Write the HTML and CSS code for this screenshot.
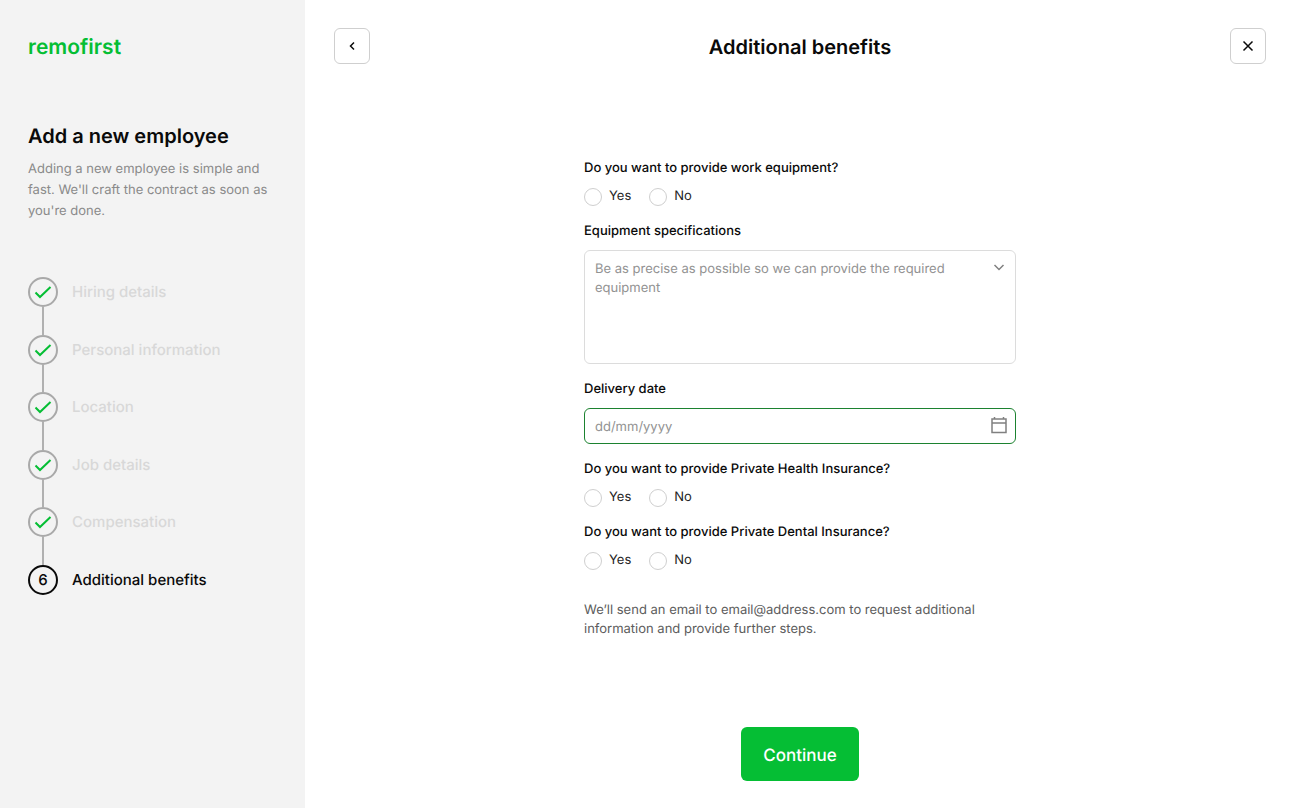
FILE: index.html
```
<!DOCTYPE html>
<html lang="en">
<head>
    <meta charset="UTF-8">
    <meta name="viewport" content="width=device-width, initial-scale=1.0">
    <title>Add a new employee - Additional benefits</title>
    <link rel="stylesheet" href="styles.css">
</head>
<body>
    <!-- Sidebar -->
    <aside class="sidebar">
        <a href="#" class="logo">remofirst</a>
        <h1 class="sidebar-title">Add a new employee</h1>
        <p class="sidebar-text">Adding a new employee is simple and fast. We'll craft the contract as soon as you're done.</p>

        <ol class="steps">
            <li class="step done">
                <div class="step-track">
                    <span class="step-circle"><svg width="18" height="14" viewBox="0 0 18 14"><path d="M1.5 7.5 L6 12 L16.5 2"/></svg></span>
                    <span class="step-line"></span>
                </div>
                <span class="step-label">Hiring details</span>
            </li>
            <li class="step done">
                <div class="step-track">
                    <span class="step-circle"><svg width="18" height="14" viewBox="0 0 18 14"><path d="M1.5 7.5 L6 12 L16.5 2"/></svg></span>
                    <span class="step-line"></span>
                </div>
                <span class="step-label">Personal information</span>
            </li>
            <li class="step done">
                <div class="step-track">
                    <span class="step-circle"><svg width="18" height="14" viewBox="0 0 18 14"><path d="M1.5 7.5 L6 12 L16.5 2"/></svg></span>
                    <span class="step-line"></span>
                </div>
                <span class="step-label">Location</span>
            </li>
            <li class="step done">
                <div class="step-track">
                    <span class="step-circle"><svg width="18" height="14" viewBox="0 0 18 14"><path d="M1.5 7.5 L6 12 L16.5 2"/></svg></span>
                    <span class="step-line"></span>
                </div>
                <span class="step-label">Job details</span>
            </li>
            <li class="step done">
                <div class="step-track">
                    <span class="step-circle"><svg width="18" height="14" viewBox="0 0 18 14"><path d="M1.5 7.5 L6 12 L16.5 2"/></svg></span>
                    <span class="step-line"></span>
                </div>
                <span class="step-label">Compensation</span>
            </li>
            <li class="step current">
                <div class="step-track">
                    <span class="step-circle">6</span>
                </div>
                <span class="step-label">Additional benefits</span>
            </li>
        </ol>
    </aside>

    <!-- Content -->
    <main class="content">
        <header class="topbar">
            <button type="button" class="icon-button" aria-label="Back">
                <svg width="12" height="12" viewBox="0 0 12 12"><path d="M8 2.5 L4.5 6 L8 9.5"/></svg>
            </button>
            <h2 class="page-title">Additional benefits</h2>
            <button type="button" class="icon-button" aria-label="Close">
                <svg width="12" height="12" viewBox="0 0 12 12"><path d="M1.5 1.5 L10.5 10.5 M10.5 1.5 L1.5 10.5"/></svg>
            </button>
        </header>

        <form class="form">
            <fieldset class="field">
                <legend class="field-label">Do you want to provide work equipment?</legend>
                <div class="options">
                    <label class="option"><input type="radio" name="equipment" value="yes">Yes</label>
                    <label class="option"><input type="radio" name="equipment" value="no">No</label>
                </div>
            </fieldset>

            <div class="field">
                <label class="field-label" for="specs">Equipment specifications</label>
                <div class="box">
                    <textarea id="specs" placeholder="Be as precise as possible so we can provide the required equipment"></textarea>
                    <svg class="box-icon" width="18" height="18" viewBox="0 0 18 18"><path d="M4.5 7 L9 11.5 L13.5 7"/></svg>
                </div>
            </div>

            <div class="field">
                <label class="field-label" for="delivery">Delivery date</label>
                <div class="box">
                    <input type="text" class="date" id="delivery" placeholder="dd/mm/yyyy">
                    <svg class="box-icon" width="18" height="18" viewBox="0 0 18 18"><path d="M2 3 H16 V16.5 H2 Z M2 7 H16 M4.5 1 V3 M13.5 1 V3"/></svg>
                </div>
            </div>

            <fieldset class="field">
                <legend class="field-label">Do you want to provide Private Health Insurance?</legend>
                <div class="options">
                    <label class="option"><input type="radio" name="health" value="yes">Yes</label>
                    <label class="option"><input type="radio" name="health" value="no">No</label>
                </div>
            </fieldset>

            <fieldset class="field">
                <legend class="field-label">Do you want to provide Private Dental Insurance?</legend>
                <div class="options">
                    <label class="option"><input type="radio" name="dental" value="yes">Yes</label>
                    <label class="option"><input type="radio" name="dental" value="no">No</label>
                </div>
            </fieldset>

            <p class="note">We’ll send an email to email@address.com to request additional information and provide further steps.</p>

            <button type="submit" class="continue">Continue</button>
        </form>
    </main>
</body>
</html>
```
FILE: styles.css
```
* {
    box-sizing: border-box;
}
body {
    margin: 0;
    min-height: 100vh;
    display: flex;
    font-family: Inter, "Liberation Sans", sans-serif;
    font-size: 13px;
    line-height: 19px;
    color: #1f1f1f;
    background-color: #ffffff;
    text-rendering: geometricPrecision;
}
h1, h2, p, ol {
    margin: 0;
    padding: 0;
}
svg {
    fill: none;
    stroke: currentColor;
}

/* Sidebar */
.sidebar {
    flex: 0 0 305px;
    padding: 34px 28px;
    background-color: #f3f3f3;
}
.logo {
    display: block;
    font-size: 21px;
    font-weight: 600;
    line-height: 28px;
    color: #05be34;
    text-decoration: none;
}
.sidebar-title {
    margin-top: 60px;
    font-size: 20px;
    font-weight: 600;
    line-height: 28px;
    color: #0a0a0a;
}
.sidebar-text {
    margin-top: 9px;
    line-height: 21px;
    color: #8a8a8a;
}
.steps {
    height: 318px;
    margin-top: 55px;
    display: flex;
    flex-direction: column;
    list-style: none;
}
.step {
    display: flex;
    gap: 14px;
    font-size: 15px;
    line-height: 30px;
    font-weight: 500;
    color: #d8d8d8;
}
.step.done {
    flex: 1;
}
.step-track {
    display: flex;
    flex-direction: column;
    align-items: center;
}
.step-circle {
    width: 30px;
    height: 30px;
    display: flex;
    align-items: center;
    justify-content: center;
    border: 2px solid #a9a9a9;
    border-radius: 50%;
    color: #05be34;
}
.step-circle svg {
    stroke-width: 2;
}
.step-line {
    flex: 1;
    width: 2px;
    background-color: #b0b0b0;
}
.step.current,
.step.current .step-circle {
    color: #0a0a0a;
    border-color: #0a0a0a;
}

/* Content */
.content {
    flex: 1;
    display: flex;
    flex-direction: column;
    padding: 28px 27px 27px 29px;
}
.topbar {
    display: flex;
    align-items: center;
    justify-content: space-between;
}
.icon-button {
    width: 36px;
    height: 36px;
    padding: 0;
    display: flex;
    align-items: center;
    justify-content: center;
    background-color: #ffffff;
    border: 1px solid #cfcfcf;
    border-radius: 6px;
    color: #0a0a0a;
    cursor: pointer;
}
.icon-button svg {
    stroke-width: 1.5;
}
.page-title {
    padding-top: 2px;
    font-size: 20px;
    font-weight: 600;
    line-height: 28px;
    color: #0a0a0a;
}

/* Form */
.form {
    flex: 1;
    width: 100%;
    max-width: 432px;
    margin: 93px auto 0;
    display: flex;
    flex-direction: column;
}
.field {
    min-width: 0;
    margin: 0 0 14px;
    padding: 0;
    border: none;
}
.field-label {
    display: block;
    margin-bottom: 8px;
    padding: 0;
    font-weight: 500;
    line-height: 22px;
    color: #0a0a0a;
}
.options {
    display: flex;
    gap: 18px;
}
.option {
    display: flex;
    align-items: center;
    gap: 7px;
}
.option input {
    appearance: none;
    width: 18px;
    height: 18px;
    margin: 0;
    border: 1px solid #cfcfcf;
    border-radius: 50%;
}
.option input:checked {
    border: 5px solid #05be34;
}
.box {
    position: relative;
}
textarea, .date {
    display: block;
    width: 100%;
    padding: 9px 40px 7px 10px;
    font: inherit;
    text-rendering: inherit;
    color: #0a0a0a;
    background-color: #ffffff;
    border: 1px solid #dcdcdc;
    border-radius: 6px;
    outline: none;
}
textarea {
    height: 114px;
    resize: none;
}
.date {
    height: 36px;
    border-color: #1c8230;
}
textarea::placeholder, .date::placeholder {
    color: #929292;
}
.box-icon {
    position: absolute;
    top: 8px;
    right: 8px;
    color: #808080;
    stroke-width: 1.5;
    pointer-events: none;
}
.note {
    margin-top: 17px;
    color: #5c5c5c;
}
.continue {
    align-self: center;
    margin-top: auto;
    padding: 15px 22px 11px;
    font-family: inherit;
    font-size: 17px;
    font-weight: 500;
    line-height: 28px;
    text-rendering: inherit;
    color: #ffffff;
    background-color: #05be34;
    border: none;
    border-radius: 6px;
    cursor: pointer;
}
```
